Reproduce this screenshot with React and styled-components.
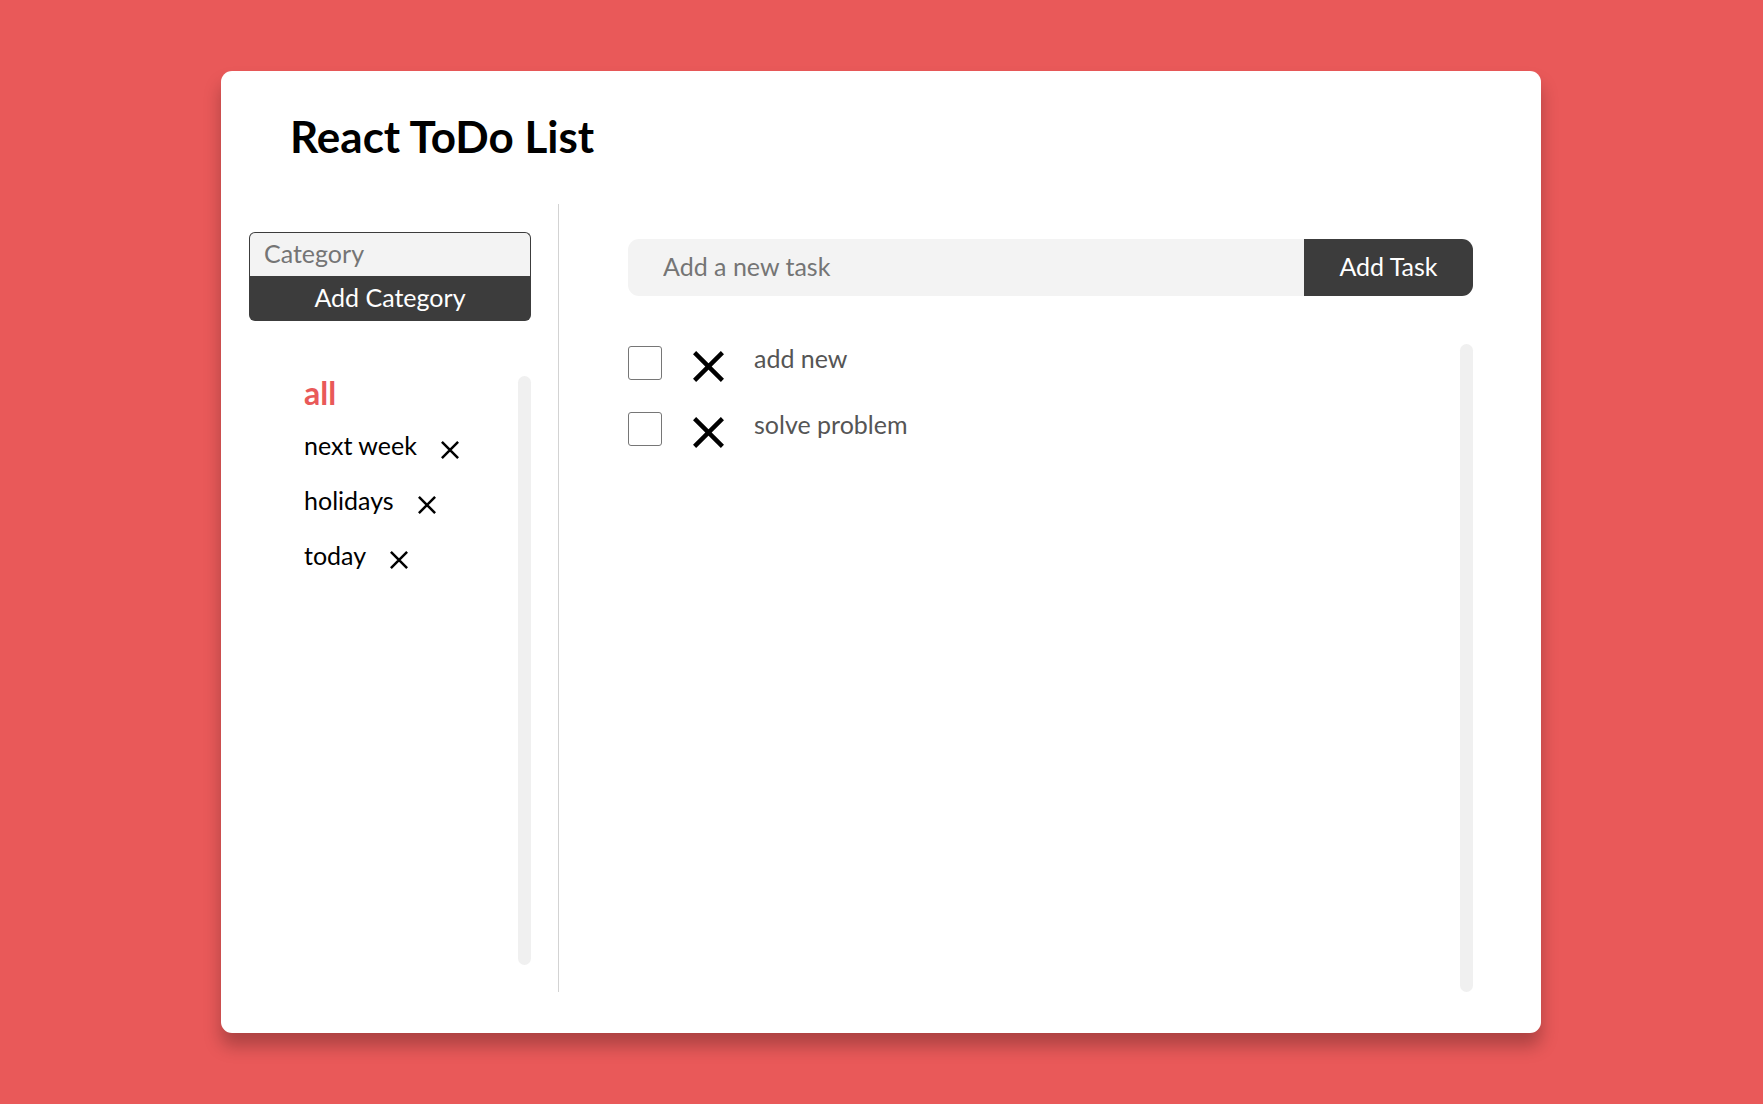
import React from "react";
import styled, { createGlobalStyle, css } from "styled-components";

const GlobalStyle = createGlobalStyle`
  *, *::before, *::after { box-sizing: border-box; }
  body {
    margin: 0;
    background: #e95959;
    font-family: Lato, "Liberation Sans", sans-serif;
    font-size: 25px;
    line-height: 30px;
    color: #000;
  }
  button, input { font: inherit; margin: 0; }
  ul { list-style: none; margin: 0; padding: 0; }
`;

const Page = styled.div`
  display: flex;
  min-height: 100vh;
  padding: 71px 222px 71px 221px;
  @media (max-width: 1300px) { padding: 24px; }
`;

const Card = styled.main`
  flex: 1;
  min-width: 0;
  display: flex;
  flex-direction: column;
  padding-bottom: 41px;
  background: #fff;
  border-radius: 11px;
  box-shadow: 0 13px 17px rgba(0, 0, 0, 0.26);
`;

const Title = styled.h1`
  margin: 0;
  padding: 39px 69px 42px;
  font-size: 44px;
  line-height: 52px;
  font-weight: 700;
`;

const Columns = styled.div`
  flex: 1;
  display: flex;
  @media (max-width: 800px) { flex-direction: column; }
`;

const Sidebar = styled.aside`
  flex: 0 0 338px;
  min-width: 0;
  display: flex;
  flex-direction: column;
  padding: 28px 27px 27px 28px;
  border-right: 1px solid #d3d3d3;
`;

const Content = styled.section`
  flex: 1;
  min-width: 0;
  display: flex;
  flex-direction: column;
  padding: 35px 68px 0 69px;
`;

const CategoryForm = styled.form`
  display: flex;
  flex-direction: column;
  margin-bottom: 55px;
`;

const TaskForm = styled.form`
  display: flex;
  height: 57px;
  margin-bottom: 48px;
`;

const TextInput = styled.input`
  min-width: 0;
  background: #f3f3f3;
  outline: none;
  &::placeholder { color: #757575; opacity: 1; }
  ${(p) =>
    p.$stacked
      ? css`
          height: 44px;
          padding: 0 14px 4px;
          border: 1px solid #3c3c3c;
          border-bottom: 0;
          border-radius: 6px 6px 0 0;
        `
      : css`
          flex: 1;
          padding: 0 35px 4px;
          border: 0;
          border-radius: 11px 0 0 11px;
        `}
`;

const SubmitButton = styled.button`
  padding: 0 0 4px;
  border: 0;
  background: #3c3c3c;
  color: #fff;
  cursor: pointer;
  ${(p) =>
    p.$stacked
      ? css`
          height: 45px;
          border-radius: 0 0 6px 6px;
        `
      : css`
          width: 169px;
          border-radius: 0 11px 11px 0;
        `}
`;

const ScrollArea = styled.div`
  flex: 1;
  display: flex;
  justify-content: space-between;
`;

const Track = styled.div`
  flex: none;
  width: 13px;
  border-radius: 7px;
  background: #f0f0f0;
`;

const CategoryList = styled.ul`
  padding-left: 55px;
`;

const CategoryItem = styled.li`
  display: flex;
  align-items: center;
  height: 55px;
  gap: 24px;
  &:first-child { height: 41px; padding-bottom: 7px; }
`;

const CategoryButton = styled.button`
  padding: 0;
  border: 0;
  background: none;
  color: ${(p) => (p.$active ? "#e95959" : "#000")};
  font-size: ${(p) => (p.$active ? "32px" : "25px")};
  font-weight: ${(p) => (p.$active ? 700 : 400)};
  cursor: pointer;
`;

const IconButton = styled.button`
  display: flex;
  padding: ${(p) => (p.$large ? "7px 0 0" : "10px 0 0")};
  border: 0;
  background: none;
  cursor: pointer;
`;

const TaskItem = styled.li`
  display: flex;
  align-items: flex-start;
  height: 66px;
`;

const Checkbox = styled.input`
  appearance: none;
  width: 34px;
  height: 34px;
  margin: 2px 31px 0 0;
  border: 1px solid #767676;
  border-radius: 3px;
  background: #fff;
  &:checked { background: #3c3c3c; }
`;

const TaskLabel = styled.label`
  margin-left: 30px;
  color: #555;
  line-height: 28px;
`;

function Cross({ size, stroke }) {
  const near = stroke * 0.36;
  const far = size - near;
  return (
    <svg width={size} height={size} viewBox={`0 0 ${size} ${size}`} aria-hidden="true">
      <path
        d={`M${near} ${near}L${far} ${far}M${far} ${near}L${near} ${far}`}
        stroke="#000"
        strokeWidth={stroke}
        fill="none"
      />
    </svg>
  );
}

const categories = ["next week", "holidays", "today"];
const tasks = ["add new", "solve problem"];

export default function App() {
  const stop = (e) => e.preventDefault();
  return (
    <>
      <GlobalStyle />
      <Page>
        <Card>
          <Title>React ToDo List</Title>
          <Columns>
            <Sidebar>
              <CategoryForm onSubmit={stop}>
                <TextInput $stacked placeholder="Category" aria-label="Category" />
                <SubmitButton $stacked>Add Category</SubmitButton>
              </CategoryForm>
              <ScrollArea>
                <CategoryList>
                  <CategoryItem>
                    <CategoryButton $active>all</CategoryButton>
                  </CategoryItem>
                  {categories.map((name) => (
                    <CategoryItem key={name}>
                      <CategoryButton>{name}</CategoryButton>
                      <IconButton aria-label={`Delete ${name}`}>
                        <Cross size={18} stroke={2.5} />
                      </IconButton>
                    </CategoryItem>
                  ))}
                </CategoryList>
                <Track />
              </ScrollArea>
            </Sidebar>
            <Content>
              <TaskForm onSubmit={stop}>
                <TextInput placeholder="Add a new task" aria-label="Add a new task" />
                <SubmitButton>Add Task</SubmitButton>
              </TaskForm>
              <ScrollArea>
                <ul>
                  {tasks.map((name, i) => (
                    <TaskItem key={name}>
                      <Checkbox type="checkbox" id={`task-${i}`} />
                      <IconButton $large aria-label={`Delete ${name}`}>
                        <Cross size={31} stroke={4.4} />
                      </IconButton>
                      <TaskLabel htmlFor={`task-${i}`}>{name}</TaskLabel>
                    </TaskItem>
                  ))}
                </ul>
                <Track />
              </ScrollArea>
            </Content>
          </Columns>
        </Card>
      </Page>
    </>
  );
}
